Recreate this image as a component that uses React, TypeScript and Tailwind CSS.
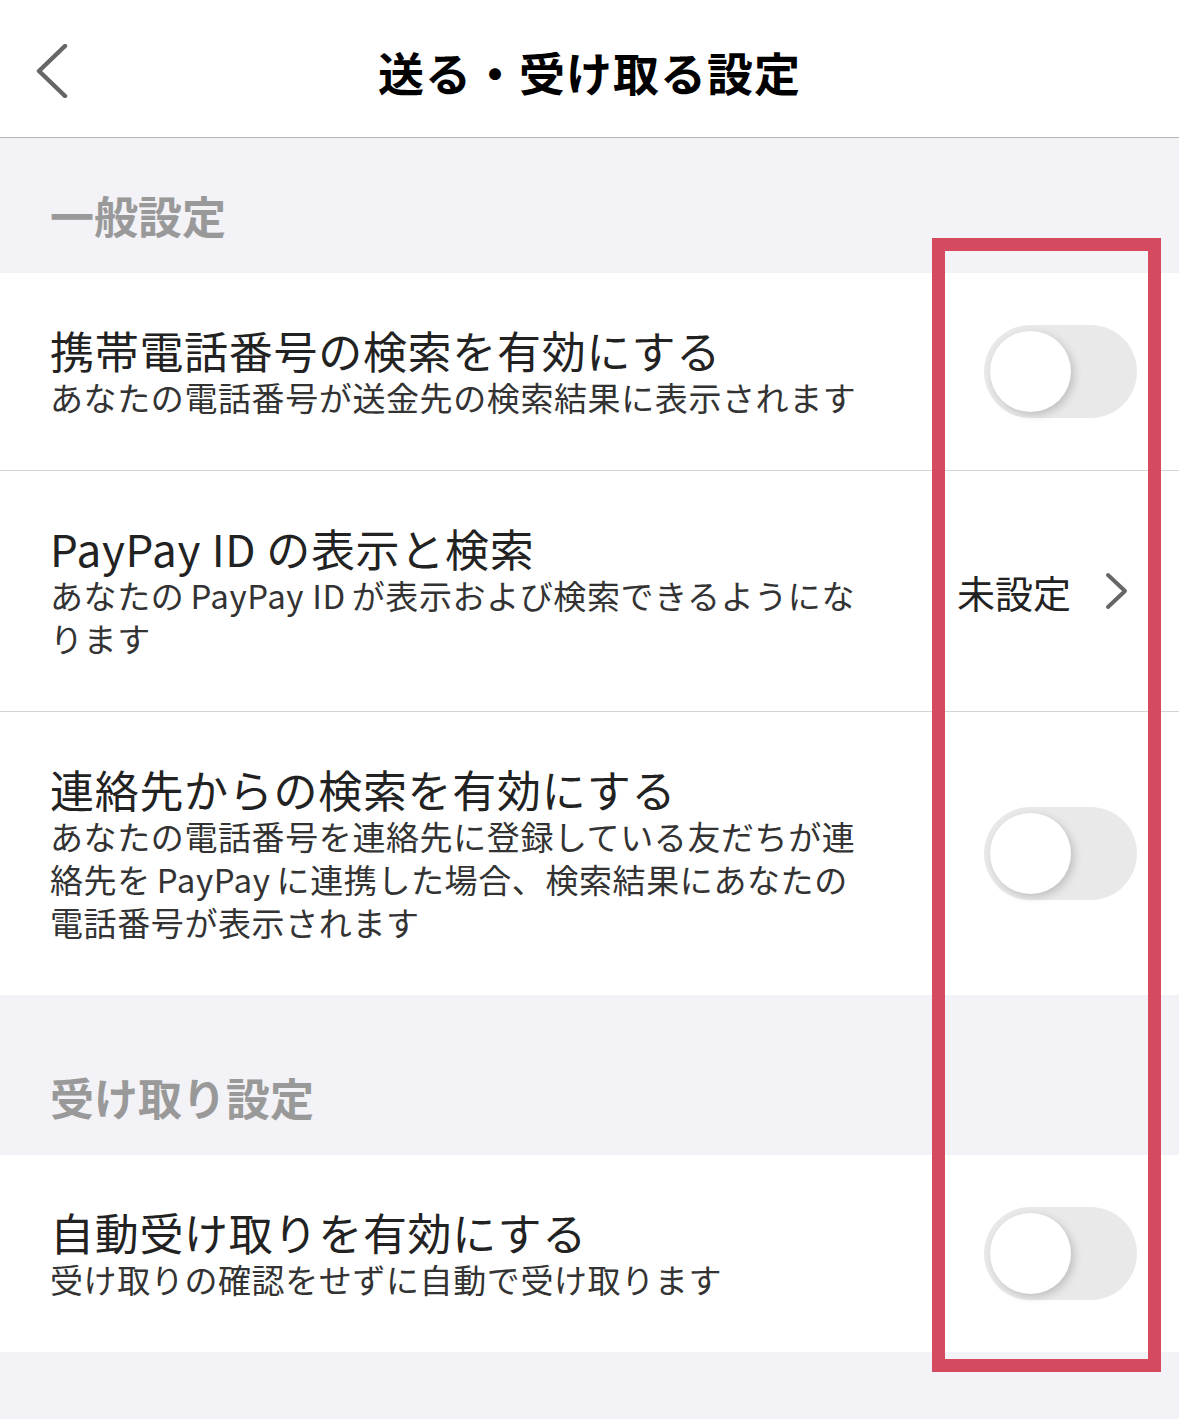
import React from 'react';

const font = { fontFamily: '"Noto Sans CJK JP", "Noto Sans", sans-serif' };

// iOS puts a little air around latin runs inside Japanese text
const L = ({ children }: { children: React.ReactNode }) => <span className="mx-[6px]">{children}</span>;

const Toggle = () => (
    <div className="w-[153px] h-[93px] rounded-full bg-[#e9e9ea] flex items-center pl-[6px] shrink-0">
        <div className="w-[81px] h-[81px] rounded-full bg-white shadow-[3px_3px_8px_rgba(0,0,0,0.18)]" />
    </div>
);

const SectionHeader = ({ label, top }: { label: string; top: string }) => (
    <div className={`bg-[#f2f2f7] pl-[50px] pb-[36px] ${top}`}>
        <h2 className="text-[44px] leading-[44px] font-bold text-[#999999]">{label}</h2>
    </div>
);

const Row = ({ title, lines, right, divider }: { title: React.ReactNode; lines: React.ReactNode[]; right: React.ReactNode; divider?: boolean }) => (
    <div className={`bg-white flex items-center pl-[50px] pr-[42px] py-[51px] ${divider ? 'border-b border-[#d4d4d4]' : ''}`}>
        <div className="w-[840px]">
            <div className="text-[44px] leading-[52px] tracking-[0.7px] text-[#222222] whitespace-nowrap">{title}</div>
            {lines.map((l, i) => (
                <div key={i} className="text-[33px] leading-[43px] tracking-[0.6px] text-[#333333] whitespace-nowrap">{l}</div>
            ))}
        </div>
        <div className="ml-auto flex items-center">{right}</div>
    </div>
);

export default function App() {
    return (
        <div className="relative min-h-screen bg-[#f2f2f7]" style={font}>
            {/* Header */}
            <header className="h-[138px] bg-white border-b border-[#b4b4b4] relative flex items-center justify-center">
                <svg className="absolute left-[34px] top-[44px]" width="36" height="54" viewBox="0 0 36 54" fill="none">
                    <polyline points="31,2 5,27 31,52" stroke="#666666" strokeWidth="4.5" strokeLinecap="round" strokeLinejoin="round" />
                </svg>
                <h1 className="text-[46px] font-bold text-black tracking-[1px] pt-[6px]">送る・受け取る設定</h1>
            </header>

            <SectionHeader label="一般設定" top="pt-[55px]" />

            <Row
                title="携帯電話番号の検索を有効にする"
                lines={['あなたの電話番号が送金先の検索結果に表示されます']}
                right={<Toggle />}
                divider
            />
            <Row
                title={<>PayPay ID<span className="ml-[10px]">の表示と検索</span></>}
                lines={[<>あなたの<L>PayPay ID</L>が表示および検索できるようにな</>, 'ります']}
                right={
                    <div className="flex items-center gap-[34px] pr-[8px]">
                        <span className="text-[38px] text-[#222222]">未設定</span>
                        <svg width="24" height="38" viewBox="0 0 24 38" fill="none">
                            <polyline points="3,3 20,19 3,35" stroke="#666666" strokeWidth="4" strokeLinecap="round" strokeLinejoin="round" />
                        </svg>
                    </div>
                }
                divider
            />
            <Row
                title="連絡先からの検索を有効にする"
                lines={[
                    'あなたの電話番号を連絡先に登録している友だちが連',
                    <>絡先を<L>PayPay</L>に連携した場合、検索結果にあなたの</>,
                    '電話番号が表示されます',
                ]}
                right={<Toggle />}
            />

            <SectionHeader label="受け取り設定" top="pt-[80px]" />

            <Row
                title="自動受け取りを有効にする"
                lines={['受け取りの確認をせずに自動で受け取ります']}
                right={<Toggle />}
            />

            {/* annotation frame */}
            <div className="absolute left-[932px] top-[238px] w-[229px] h-[1134px] border-[13px] border-[#d64a5f] pointer-events-none" />
        </div>
    );
}
